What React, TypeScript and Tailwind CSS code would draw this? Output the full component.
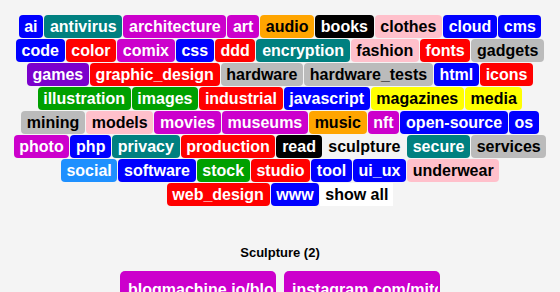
import React from "react";

type Tag = { name: string; bg: string; dark?: boolean };

// colour per tag, dark = black text
const TAGS: Tag[] = [
  { name: "ai", bg: "bg-[#0000ff]" },
  { name: "antivirus", bg: "bg-[#008080]" },
  { name: "architecture", bg: "bg-[#cc00cc]" },
  { name: "art", bg: "bg-[#cc00cc]" },
  { name: "audio", bg: "bg-[#ffa500]", dark: true },
  { name: "books", bg: "bg-[#000000]" },
  { name: "clothes", bg: "bg-[#ffc0cb]", dark: true },
  { name: "cloud", bg: "bg-[#0000ff]" },
  { name: "cms", bg: "bg-[#0000ff]" },
  { name: "code", bg: "bg-[#0000ff]" },
  { name: "color", bg: "bg-[#ff0000]" },
  { name: "comix", bg: "bg-[#cc00cc]" },
  { name: "css", bg: "bg-[#0000ff]" },
  { name: "ddd", bg: "bg-[#ff0000]" },
  { name: "encryption", bg: "bg-[#008080]" },
  { name: "fashion", bg: "bg-[#ffc0cb]", dark: true },
  { name: "fonts", bg: "bg-[#ff0000]" },
  { name: "gadgets", bg: "bg-[#bbbbbb]", dark: true },
  { name: "games", bg: "bg-[#7b00cc]" },
  { name: "graphic_design", bg: "bg-[#ff0000]" },
  { name: "hardware", bg: "bg-[#bbbbbb]", dark: true },
  { name: "hardware_tests", bg: "bg-[#bbbbbb]", dark: true },
  { name: "html", bg: "bg-[#0000ff]" },
  { name: "icons", bg: "bg-[#ff0000]" },
  { name: "illustration", bg: "bg-[#00a000]" },
  { name: "images", bg: "bg-[#00a000]" },
  { name: "industrial", bg: "bg-[#ff0000]" },
  { name: "javascript", bg: "bg-[#0000ff]" },
  { name: "magazines", bg: "bg-[#ffff00]", dark: true },
  { name: "media", bg: "bg-[#ffff00]", dark: true },
  { name: "mining", bg: "bg-[#bbbbbb]", dark: true },
  { name: "models", bg: "bg-[#ffc0cb]", dark: true },
  { name: "movies", bg: "bg-[#cc00cc]" },
  { name: "museums", bg: "bg-[#cc00cc]" },
  { name: "music", bg: "bg-[#ffa500]", dark: true },
  { name: "nft", bg: "bg-[#cc00cc]" },
  { name: "open-source", bg: "bg-[#0000ff]" },
  { name: "os", bg: "bg-[#0000ff]" },
  { name: "photo", bg: "bg-[#cc00cc]" },
  { name: "php", bg: "bg-[#0000ff]" },
  { name: "privacy", bg: "bg-[#008080]" },
  { name: "production", bg: "bg-[#ff0000]" },
  { name: "read", bg: "bg-[#000000]" },
  { name: "sculpture", bg: "bg-transparent", dark: true },
  { name: "secure", bg: "bg-[#008080]" },
  { name: "services", bg: "bg-[#bbbbbb]", dark: true },
  { name: "social", bg: "bg-[#1e90ff]" },
  { name: "software", bg: "bg-[#0000ff]" },
  { name: "stock", bg: "bg-[#00a000]" },
  { name: "studio", bg: "bg-[#ff0000]" },
  { name: "tool", bg: "bg-[#0000ff]" },
  { name: "ui_ux", bg: "bg-[#0000ff]" },
  { name: "underwear", bg: "bg-[#ffc0cb]", dark: true },
  { name: "web_design", bg: "bg-[#ff0000]" },
  { name: "www", bg: "bg-[#0000ff]" },
];

const LINKS = ["blogmachine.io/blog/sculpture", "instagram.com/mitchellsculpts"];

export default function App() {
  return (
    <div
      className="min-h-screen bg-[#f4f4f4] px-[12px] pt-[15px] text-black"
      style={{ fontFamily: '"Liberation Sans", Arial, sans-serif' }}
    >
      {/* tag cloud */}
      <div className="flex flex-wrap justify-center gap-px">
        {TAGS.map((t) => (
          <a
            key={t.name}
            href="#"
            className={`h-[23px] rounded-[4px] px-[5.7px] text-[16px] font-bold leading-[23px] ${t.bg} ${
              t.dark ? "text-black" : "text-white"
            }`}
          >
            {t.name}
          </a>
        ))}
        <a href="#" className="h-[23px] bg-white px-[5px] text-[16px] font-bold leading-[23px] text-black">
          show all
        </a>
      </div>

      <h2 className="mt-[39px] text-center text-[13px] font-bold leading-[15px]">Sculpture (2)</h2>

      <div className="mt-[11px] flex justify-center gap-2">
        {LINKS.map((l) => (
          <div key={l} className="w-[156px] rounded-[5px] bg-[#cc00cc] pl-2 pr-[2px] pt-[9px] pb-3">
            <div className="overflow-hidden whitespace-nowrap text-[16px] font-bold leading-[19px] text-white">{l}</div>
          </div>
        ))}
      </div>
    </div>
  );
}
